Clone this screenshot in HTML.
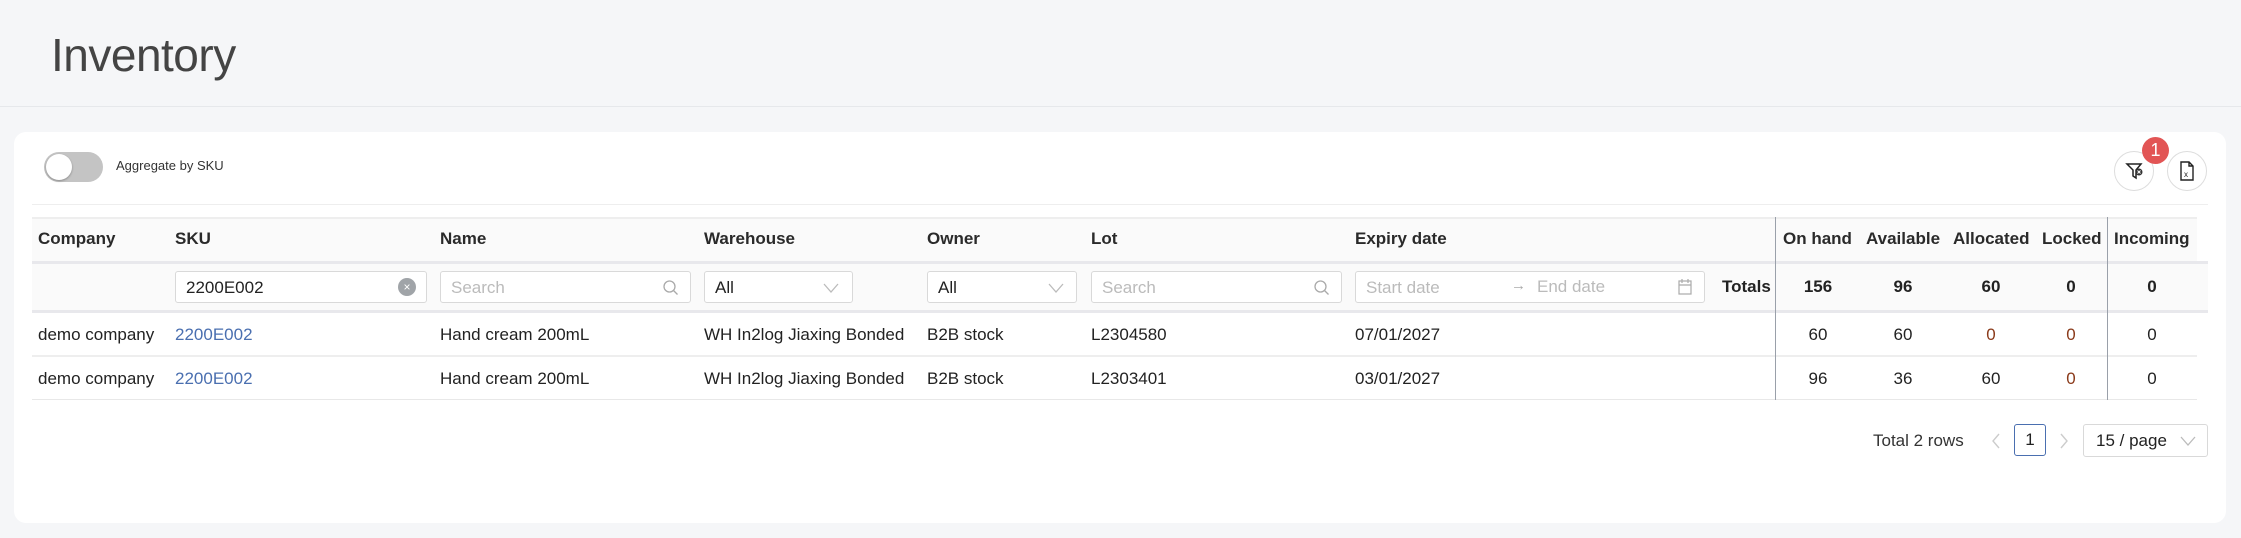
<!DOCTYPE html>
<html><head><meta charset="utf-8"><style>
*{box-sizing:border-box;margin:0;padding:0}
body{width:2241px;height:538px;background:#f5f6f8;font-family:"Liberation Sans",sans-serif;color:#222;position:relative;overflow:hidden;font-size:17px}
.a{position:absolute;white-space:nowrap}
.title{left:51px;top:28px;font-size:46px;font-weight:normal;color:#444;letter-spacing:-0.5px}
.hline{left:0;top:106px;width:2241px;height:1px;background:#e6e8eb}
.card{left:14px;top:132px;width:2212px;height:391px;background:#fff;border-radius:12px}
.th{font-weight:bold;top:229px;font-size:17px;color:#2a2a2a}
.inp{border:1px solid #d9d9d9;border-radius:3px;height:32px;top:271px;background:#fff;font-size:17px;padding:6px 10px;color:#222}
.ph{color:#bbb}
.row{font-size:17px}
.c{text-align:center;width:60px}
.vl{width:1px;background:#9aa0aa}
.link{color:#4a6fb0}
</style></head><body>
<div class="a title">Inventory</div>
<div class="a hline"></div>
<div class="a card"></div>

<div class="a" style="left:44px;top:152px;width:59px;height:30px;border-radius:15px;background:#c4c4c4"></div>
<div class="a" style="left:46px;top:154px;width:26px;height:26px;border-radius:13px;background:#fff;box-shadow:0 1px 2px rgba(0,0,0,.3)"></div>
<div class="a" style="left:116px;top:158px;font-size:13px;color:#333">Aggregate by SKU</div>

<div class="a" style="left:2114px;top:151px;width:40px;height:40px;border-radius:50%;border:1px solid #ddd;background:#fff"></div>
<svg class="a" style="left:2124px;top:160px" width="22" height="22" viewBox="0 0 22 22"><path d="M3 4h14l-5 6v8l-3-2v-6z" fill="none" stroke="#222" stroke-width="1.5"/><circle cx="15" cy="12" r="3.5" fill="#333"/><path d="M13.5 10.5l3 3M16.5 10.5l-3 3" stroke="#fff" stroke-width="1"/></svg>
<div class="a" style="left:2142px;top:137px;width:27px;height:27px;border-radius:50%;background:#e25555;color:#fff;font-size:18px;text-align:center;line-height:27px">1</div>
<div class="a" style="left:2167px;top:151px;width:40px;height:40px;border-radius:50%;border:1px solid #ddd;background:#fff"></div>
<svg class="a" style="left:2177px;top:160px" width="20" height="22" viewBox="0 0 20 22"><path d="M4 2h8l4 4v14H4z M12 2v4h4" fill="none" stroke="#222" stroke-width="1.4"/><text x="7" y="17" font-size="8" font-family="Liberation Sans" fill="#222">x</text></svg>

<div class="a" style="left:32px;top:204px;width:2176px;height:1px;background:#eee"></div>

<div class="a" style="left:32px;top:217px;width:2165px;height:44px;background:#fafafa;border-top:2px solid #eee"></div>
<div class="a" style="left:32px;top:261px;width:2176px;height:3px;background:#e8e8ec"></div>
<div class="a" style="left:32px;top:264px;width:2176px;height:46px;background:#fafafa"></div>
<div class="a" style="left:32px;top:310px;width:2176px;height:3px;background:#e8e8ec"></div>
<div class="a" style="left:32px;top:355px;width:2165px;height:2px;background:#eee"></div>
<div class="a" style="left:32px;top:399px;width:2165px;height:1px;background:#e8e8e8"></div>
<div class="a vl" style="left:1775px;top:217px;height:183px"></div>
<div class="a vl" style="left:2107px;top:217px;height:183px"></div>

<div class="a th" style="left:38px">Company</div>
<div class="a th" style="left:175px">SKU</div>
<div class="a th" style="left:440px">Name</div>
<div class="a th" style="left:704px">Warehouse</div>
<div class="a th" style="left:927px">Owner</div>
<div class="a th" style="left:1091px">Lot</div>
<div class="a th" style="left:1355px">Expiry date</div>
<div class="a th" style="left:1783px">On hand</div>
<div class="a th" style="left:1866px">Available</div>
<div class="a th" style="left:1953px">Allocated</div>
<div class="a th" style="left:2042px">Locked</div>
<div class="a th" style="left:2114px">Incoming</div>

<div class="a inp" style="left:175px;width:252px">2200E002</div>
<div class="a" style="left:398px;top:278px;width:18px;height:18px;border-radius:50%;background:#a0a4a8;color:#fff;font-size:12px;text-align:center;line-height:18px">×</div>
<div class="a inp ph" style="left:440px;width:251px">Search</div>
<svg class="a" style="left:662px;top:279px" width="18" height="18" viewBox="0 0 18 18"><circle cx="7.5" cy="7.5" r="5.5" fill="none" stroke="#aaa" stroke-width="1.3"/><path d="M11.5 11.5l4 4" stroke="#aaa" stroke-width="1.3"/></svg>
<div class="a inp" style="left:704px;width:149px">All</div>
<svg class="a" style="left:823px;top:282px" width="16" height="12" viewBox="0 0 16 12"><path d="M1 2l7 8 7-8" fill="none" stroke="#bbb" stroke-width="1.3"/></svg>
<div class="a inp" style="left:927px;width:150px">All</div>
<svg class="a" style="left:1048px;top:282px" width="16" height="12" viewBox="0 0 16 12"><path d="M1 2l7 8 7-8" fill="none" stroke="#bbb" stroke-width="1.3"/></svg>
<div class="a inp ph" style="left:1091px;width:251px">Search</div>
<svg class="a" style="left:1313px;top:279px" width="18" height="18" viewBox="0 0 18 18"><circle cx="7.5" cy="7.5" r="5.5" fill="none" stroke="#aaa" stroke-width="1.3"/><path d="M11.5 11.5l4 4" stroke="#aaa" stroke-width="1.3"/></svg>
<div class="a inp ph" style="left:1355px;width:350px">Start date</div>
<div class="a ph" style="left:1511px;top:277px;font-size:15px;color:#aaa">→</div>
<div class="a ph" style="left:1537px;top:277px;font-size:17px">End date</div>
<svg class="a" style="left:1677px;top:278px" width="16" height="18" viewBox="0 0 16 18"><rect x="2" y="3" width="12" height="13" fill="none" stroke="#aaa" stroke-width="1.2"/><path d="M2 7h12M5 1v4M11 1v4" stroke="#aaa" stroke-width="1.2"/></svg>
<div class="a" style="left:1722px;top:277px;font-weight:bold">Totals</div>
<div class="a c" style="left:1788px;top:277px;font-weight:bold">156</div>
<div class="a c" style="left:1873px;top:277px;font-weight:bold">96</div>
<div class="a c" style="left:1961px;top:277px;font-weight:bold">60</div>
<div class="a c" style="left:2041px;top:277px;font-weight:bold">0</div>
<div class="a c" style="left:2122px;top:277px;font-weight:bold">0</div>

<div class="a row" style="left:38px;top:325px">demo company</div>
<div class="a row link" style="left:175px;top:325px">2200E002</div>
<div class="a row" style="left:440px;top:325px">Hand cream 200mL</div>
<div class="a row" style="left:704px;top:325px">WH In2log Jiaxing Bonded</div>
<div class="a row" style="left:927px;top:325px">B2B stock</div>
<div class="a row" style="left:1091px;top:325px">L2304580</div>
<div class="a row" style="left:1355px;top:325px">07/01/2027</div>
<div class="a row c" style="left:1788px;top:325px">60</div>
<div class="a row c" style="left:1873px;top:325px">60</div>
<div class="a row c" style="left:1961px;top:325px;color:#8a3a1a">0</div>
<div class="a row c" style="left:2041px;top:325px;color:#8a3a1a">0</div>
<div class="a row c" style="left:2122px;top:325px">0</div>

<div class="a row" style="left:38px;top:369px">demo company</div>
<div class="a row link" style="left:175px;top:369px">2200E002</div>
<div class="a row" style="left:440px;top:369px">Hand cream 200mL</div>
<div class="a row" style="left:704px;top:369px">WH In2log Jiaxing Bonded</div>
<div class="a row" style="left:927px;top:369px">B2B stock</div>
<div class="a row" style="left:1091px;top:369px">L2303401</div>
<div class="a row" style="left:1355px;top:369px">03/01/2027</div>
<div class="a row c" style="left:1788px;top:369px">96</div>
<div class="a row c" style="left:1873px;top:369px">36</div>
<div class="a row c" style="left:1961px;top:369px">60</div>
<div class="a row c" style="left:2041px;top:369px;color:#8a3a1a">0</div>
<div class="a row c" style="left:2122px;top:369px">0</div>

<div class="a" style="left:1873px;top:431px;color:#333">Total 2 rows</div>
<svg class="a" style="left:1990px;top:432px" width="12" height="18" viewBox="0 0 12 18"><path d="M9 2L3 9l6 7" fill="none" stroke="#ccc" stroke-width="1.4"/></svg>
<div class="a" style="left:2014px;top:424px;width:32px;height:32px;border:1px solid #4a6fb0;border-radius:3px;text-align:center;line-height:30px">1</div>
<svg class="a" style="left:2058px;top:432px" width="12" height="18" viewBox="0 0 12 18"><path d="M3 2l6 7-6 7" fill="none" stroke="#ccc" stroke-width="1.4"/></svg>
<div class="a" style="left:2083px;top:424px;width:125px;height:33px;border:1px solid #d9d9d9;border-radius:3px;padding:6px 12px">15 / page</div>
<svg class="a" style="left:2180px;top:435px" width="16" height="12" viewBox="0 0 16 12"><path d="M1 2l7 8 7-8" fill="none" stroke="#bbb" stroke-width="1.3"/></svg>
</body></html>
